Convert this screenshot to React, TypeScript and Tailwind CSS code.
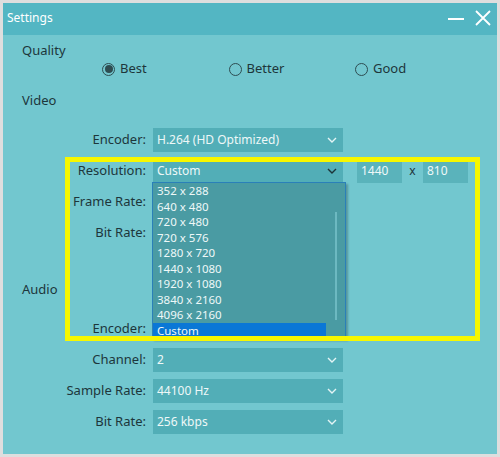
import React from "react";

const FONT = { fontFamily: '"Noto Sans", "Open Sans", sans-serif' };

function Chevron({ dark = false }: { dark?: boolean }) {
  return (
    <svg width="10" height="6" viewBox="0 0 10 6" className="mr-[6px]">
      <path
        d="M1 1 L5 5 L9 1"
        fill="none"
        stroke={dark ? "#1c3338" : "#e4f4f5"}
        strokeWidth="1.4"
      />
    </svg>
  );
}

function Radio({ label, checked = false }: { label: string; checked?: boolean }) {
  return (
    <div className="w-[126.5px] flex items-center gap-[5px]">
      <div className="w-[13px] h-[13px] rounded-full border border-[#2e4d52] flex items-center justify-center">
        {checked && <div className="w-[8px] h-[8px] rounded-full bg-[#2e4d52]" />}
      </div>
      <span>{label}</span>
    </div>
  );
}

function Row({
  label,
  value = "",
  dark = false,
  className = "",
  children,
}: {
  label: string;
  value?: string;
  dark?: boolean;
  className?: string;
  children?: React.ReactNode;
}) {
  return (
    <div className={`flex items-center h-[24px] ${className}`}>
      <div className="w-[143px] text-right">{label}</div>
      <div className="ml-[7px] w-[190px] h-[24px] bg-[#52aeb7] flex items-center justify-between pl-[4px] text-[12px] text-[#eef8f8]">
        <span>{value}</span>
        <Chevron dark={dark} />
      </div>
      {children}
    </div>
  );
}

const RESOLUTIONS = [
  "352 x 288",
  "640 x 480",
  "720 x 480",
  "720 x 576",
  "1280 x 720",
  "1440 x 1080",
  "1920 x 1080",
  "3840 x 2160",
  "4096 x 2160",
  "Custom",
];

export default function App() {
  return (
    <div className="w-[500px] h-[457px] bg-[#dedede] p-[3px]" style={FONT}>
      <div className="relative h-full bg-[#72c7cf] flex flex-col text-[13px] text-[#1d363b]">
        {/* ── Barra de título ── */}
        <div className="h-[32px] bg-[#53b6c3] flex items-center justify-between pl-[4px] pr-[6px] pb-[3px] text-white">
          <span className="text-[12px]">Settings</span>
          <div className="flex items-center gap-[11px]">
            <svg width="16" height="16" viewBox="0 0 16 16">
              <line x1="0" y1="9" x2="16" y2="9" stroke="white" strokeWidth="2" />
            </svg>
            <svg width="16" height="16" viewBox="0 0 16 16">
              <path d="M1 1 L15 15 M15 1 L1 15" stroke="white" strokeWidth="1.8" />
            </svg>
          </div>
        </div>

        {/* ── Contenido ── */}
        <div className="flex flex-col pt-[7px]">
          <div className="h-[17px] leading-[17px] pl-[19px]">Quality</div>
          <div className="h-[20px] flex items-center pl-[99px]">
            <Radio label="Best" checked />
            <Radio label="Better" />
            <Radio label="Good" />
          </div>

          <div className="mt-[11px] h-[20px] leading-[20px] pl-[19px]">Video</div>
          <Row className="mt-[18px]" label="Encoder:" value="H.264 (HD Optimized)" />
          <Row className="mt-[7px]" label="Resolution:" value="Custom" dark>
            <div className="ml-[14px] w-[45px] h-[24px] bg-[#5ab3bb] flex items-center pl-[4px] text-[12px] text-[#eef8f8]">
              1440
            </div>
            <div className="w-[21px] text-center text-[12px]">x</div>
            <div className="w-[45px] h-[24px] bg-[#5ab3bb] flex items-center pl-[4px] text-[12px] text-[#eef8f8]">
              810
            </div>
          </Row>
          <Row className="mt-[7px]" label="Frame Rate:" />
          <Row className="mt-[7px]" label="Bit Rate:" />

          <div className="mt-[34px] h-[20px] leading-[20px] pl-[19px]">Audio</div>
          <Row className="mt-[18px]" label="Encoder:" />
          <Row className="mt-[7px]" label="Channel:" value="2" />
          <Row className="mt-[7px]" label="Sample Rate:" value="44100 Hz" />
          <Row className="mt-[7px]" label="Bit Rate:" value="256 kbps" />
        </div>

        {/* ── Lista desplegable de resolución ── */}
        <div className="absolute left-[149px] top-[179px] w-[194px] h-[157px] bg-[#4a9ba3] border border-[#2a80b8] flex shadow-[2px_2px_2px_rgba(0,0,0,0.25)]">
          <div className="w-[173px] flex flex-col text-[11.5px] text-[#eef8f8]">
            {RESOLUTIONS.map((r) => (
              <div
                key={r}
                className={`h-[15.5px] leading-[15.5px] pl-[4px] ${r === "Custom" ? "bg-[#0a77d6]" : ""}`}
              >
                {r}
              </div>
            ))}
          </div>
          <div className="flex-1 flex justify-center">
            <div className="mt-[29px] w-[2px] h-[108px] bg-[#6db9c1]" />
          </div>
        </div>

        {/* ── Marco amarillo ── */}
        <div className="absolute left-[62px] top-[154px] w-[415px] h-[184px] border-[5px] border-[#f7f700]" />
      </div>
    </div>
  );
}
